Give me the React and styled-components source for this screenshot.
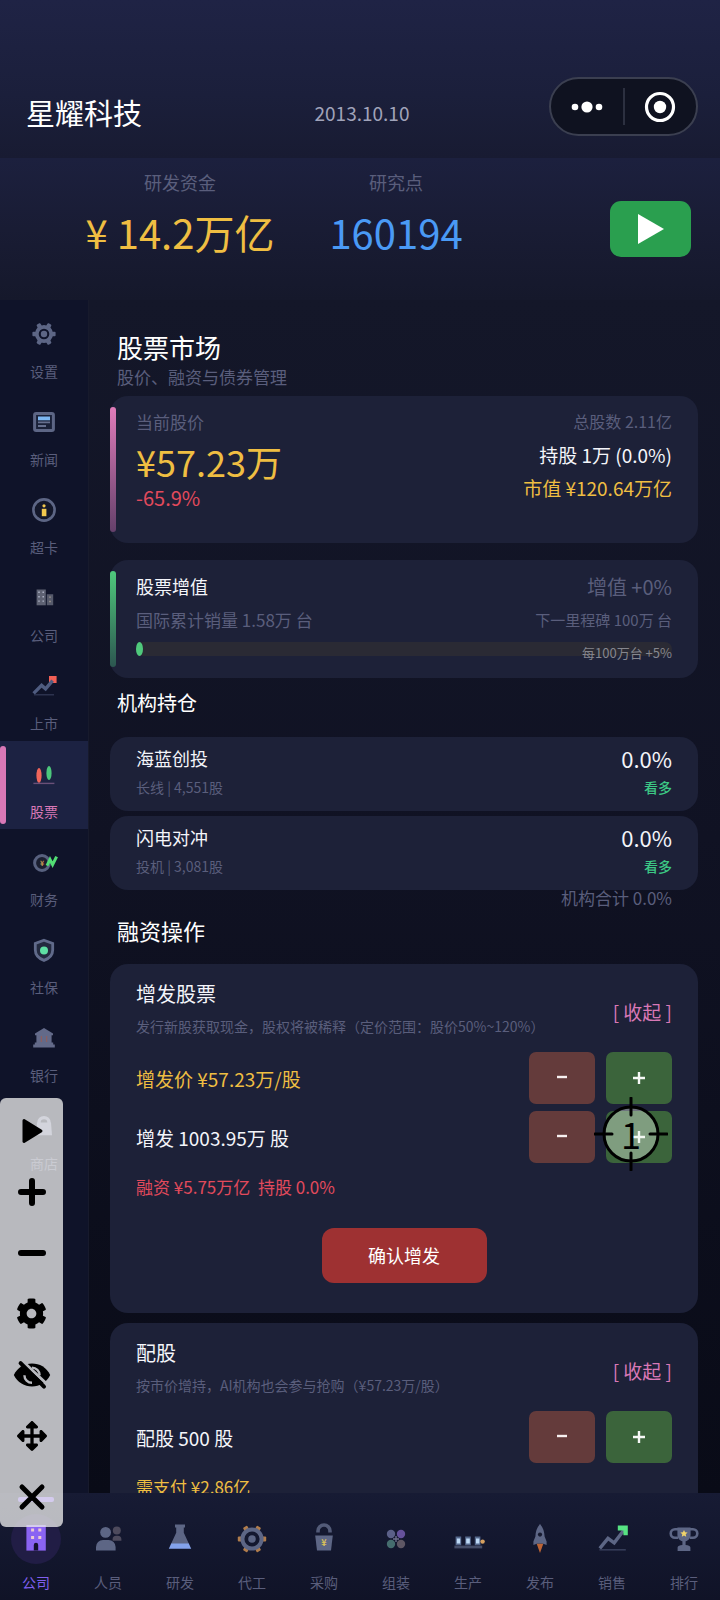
// Packages
import React from 'react';
import styled, { createGlobalStyle, css } from 'styled-components';
import { FaArrowsAlt, FaCog } from 'react-icons/fa';

const GlobalStyle = createGlobalStyle`
    * {
        box-sizing: border-box;
    }

    body {
        margin: 0;
        background-color: #0b0d1a;
        color: #FFF;
        font-family: 'Noto Sans CJK SC', 'Noto Sans', sans-serif;
        font-size: 17px;
    }

    button {
        border: 0;
        padding: 0;
        background: none;
        color: inherit;
        font: inherit;
        cursor: pointer;
    }

    h1, h2, h3, p {
        margin: 0;
        font-weight: 400;
    }
`

const colors = {
    white: '#F4F5FA',
    muted: '#5A5E7C',
    gold: '#EFBE42',
    blue: '#4A9AF5',
    red: '#E24A5C',
    pink: '#D878B6',
    green: '#3CC985',
    steel: '#5D6685',
}

const Page = styled.div`
    height: 100vh;
    display: flex;
    flex-direction: column;
    position: relative;
    overflow: hidden;
`

/* Header */

const TitleBar = styled.header`
    display: grid;
    grid-template-columns: 1fr auto 1fr;
    align-items: center;
    padding: 77px 22px 11px 26px;
    height: 158px;
    background: linear-gradient(180deg, #1F2345 0%, #1B1F3B 60%, #181B32 100%);
`

const CompanyName = styled.h1`
    font-size: 29px;
    line-height: 44px;
`

const GameDate = styled.time`
    color: #A0A3BA;
    font-size: 19px;
`

const Capsule = styled.div`
    justify-self: end;
    align-self: start;
    width: 149px;
    height: 59px;
    display: flex;
    align-items: center;
    border: 2px solid #3B3F50;
    border-radius: 30px;
    background-color: #0F1220;
`

const CapsuleButton = styled.button`
    flex: 1;
    height: 37px;
    display: flex;
    align-items: center;
    justify-content: center;

    & + & {
        border-left: 2px solid #2C3040;
    }
`

const StatsBar = styled.section`
    display: flex;
    align-items: flex-start;
    height: 142px;
    padding: 12px 29px 0 10%;
    background: linear-gradient(180deg, #1C203E 0%, #191C34 50%, #15182B 100%);
`

const Stat = styled.div`
    width: 216px;
    text-align: center;
    color: ${props => props.$color};
    font-size: 40px;
    line-height: 60px;
    white-space: nowrap;
`

const StatLabel = styled.div`
    color: ${colors.muted};
    font-size: 18px;
    line-height: 24px;
    margin-bottom: 8px;
`

const PlayButton = styled.button`
    margin: 31px 0 0 auto;
    width: 81px;
    height: 56px;
    border-radius: 11px;
    background-color: #2A9F4F;
    display: flex;
    align-items: center;
    justify-content: center;
`

/* Sidebar */

const Body = styled.div`
    flex: 1;
    min-height: 0;
    display: flex;
`

const Sidebar = styled.nav`
    flex: none;
    width: 88px;
    padding-top: 1px;
    overflow: hidden;
    background-color: #0F1329;
`

const SideItem = styled.button`
    position: relative;
    width: 100%;
    height: 88px;
    padding-top: 21px;
    display: flex;
    flex-direction: column;
    align-items: center;
    gap: 15px;
    color: ${colors.muted};
    font-size: 14px;
    line-height: 20px;

    svg {
        display: block;
        overflow: visible;
    }

    ${props => props.$active && css`
        background-color: #1C2242;
        color: ${colors.pink};

        &::before {
            content: '';
            position: absolute;
            top: 5px;
            bottom: 5px;
            left: 0;
            width: 6px;
            border-radius: 3px;
            background-color: ${colors.pink};
        }
    `}
`

/* Content */

const Content = styled.main`
    flex: 1;
    min-width: 0;
    padding: 29px 22px 0 21px;
    overflow-y: auto;
    scrollbar-width: none;
    border-left: 1px solid #171A2C;
    background: linear-gradient(180deg, #141729 0%, #101223 45%, #090B17 100%);
`

const PageTitle = styled.h2`
    padding-left: 7px;
    font-size: 26px;
    line-height: 36px;
`

const PageSubtitle = styled.p`
    padding-left: 7px;
    margin-bottom: 7px;
    color: ${colors.muted};
    line-height: 24px;
`

const SectionTitle = styled.h2`
    padding: 0 7px 9px;
    font-size: ${props => props.$size}px;
    line-height: 50px;
`

const Card = styled.section`
    position: relative;
    padding: ${props => props.$padding};
    margin-bottom: ${props => props.$gap || 0}px;
    border-radius: 18px;
    background-color: #1D2138;

    ${props => props.$accent && css`
        &::before {
            content: '';
            position: absolute;
            top: 11px;
            bottom: 11px;
            left: 0;
            width: 6px;
            border-radius: 3px;
            background: linear-gradient(180deg, ${props.$accent});
        }
    `}
`

const Row = styled.div`
    display: flex;
    align-items: ${props => props.$align || 'center'};
    justify-content: space-between;
`

const Column = styled.div`
    display: flex;
    flex-direction: column;
    align-items: ${props => props.$end ? 'flex-end' : 'flex-start'};
`

const Text = styled.p`
    color: ${props => colors[props.$color || 'white']};
    font-size: ${props => props.$size || 17}px;
    font-weight: ${props => props.$weight || 400};
    line-height: ${props => props.$line || 33}px;
    white-space: pre;
`

const Track = styled.div`
    position: relative;
    height: 14px;
    margin-top: 6px;
    border-radius: 7px;
    background-color: #2A2A34;
`

const TrackFill = styled.div`
    height: 100%;
    min-width: 7px;
    border-radius: 50%;
    background-color: #4FC97C;
`

const TrackNote = styled.span`
    position: absolute;
    top: 4px;
    right: 0;
    color: #85868E;
    font-size: 13px;
    line-height: 14px;
`

const HoldingTotal = styled.p`
    padding-right: 26px;
    text-align: right;
    color: ${colors.muted};
    line-height: 15px;
`

const ToggleButton = styled.button`
    padding-top: 5px;
    color: ${colors.pink};
    font-size: 19px;
    line-height: 28px;
`

const Steps = styled.div`
    display: flex;
    flex-direction: column;
    gap: 7px;
    margin: 10px 0 9px;
`

const StepButtons = styled.div`
    display: flex;
    gap: 11px;
`

const StepButton = styled.button`
    width: 66px;
    height: 52px;
    border-radius: 7px;
    background-color: ${props => props.$plus ? '#3B643B' : '#643B3B'};
    display: flex;
    align-items: center;
    justify-content: center;
`

const ConfirmButton = styled.button`
    display: block;
    width: 165px;
    height: 55px;
    margin: 26px auto 0;
    border-radius: 12px;
    background-color: #9E3132;
    font-size: 18px;
    line-height: 55px;
`

/* Bottom navigation */

const TabBar = styled.nav`
    flex: none;
    display: flex;
    background: linear-gradient(180deg, #171B34 0%, #13172E 50%, #101327 100%);
`

const Tab = styled.button`
    position: relative;
    flex: 1;
    padding: 21px 0 8px;
    display: flex;
    flex-direction: column;
    align-items: center;
    gap: 8px;
    color: ${props => props.$active ? '#7F5FEE' : colors.muted};
    font-size: 14px;
    line-height: 20px;

    ${props => props.$active && css`
        &::before {
            content: '';
            position: absolute;
            top: 4px;
            left: 18px;
            right: 18px;
            height: 5px;
            border-radius: 2px;
            background-color: #8560F5;
        }
    `}
`

const TabIcon = styled.span`
    width: 50px;
    height: 50px;
    display: flex;
    align-items: center;
    justify-content: center;
    border-radius: 50%;
    background-color: ${props => props.$active ? '#211D45' : 'transparent'};

    svg {
        overflow: visible;
    }
`

/* Auto clicker that floats over the game */

const FloatingBar = styled.div`
    position: absolute;
    left: 0;
    bottom: 73px;
    width: 63px;
    padding-top: 2px;
    border-radius: 6px;
    background-color: rgba(235, 235, 235, 0.77);
    color: #000;
`

const FloatingButton = styled.button`
    width: 100%;
    height: 61px;
    display: flex;
    align-items: center;
    justify-content: center;
`

const Crosshair = styled.div`
    position: absolute;
    top: 1097px;
    right: 52px;
    width: 74px;
    height: 74px;
    color: #000;
    font-size: 36px;
    line-height: 72px;
    text-align: center;
    pointer-events: none;

    svg {
        position: absolute;
        top: 0;
        left: 0;
        z-index: -1;
    }
`

const CrosshairLayer = styled.div`
    position: relative;
    z-index: 0;
    height: 100%;
`

const teeth = [0, 60, 120, 180, 240, 300];

const sideItems = [
    {
        label: '设置',
        icon: (
            <g>
                <circle cx="12" cy="12" r="7.2" fill="none" stroke={colors.steel} strokeWidth="3.8" />
                <circle cx="12" cy="12" r="3.2" fill={colors.steel} />
                {teeth.map(a => (
                    <rect key={a} x="19" y="9.8" width="4.6" height="4.4" rx="1" fill={colors.steel} transform={`rotate(${a} 12 12)`} />
                ))}
            </g>
        ),
    },
    {
        label: '新闻',
        icon: (
            <g>
                <rect x="2.6" y="3.6" width="18.8" height="16.8" rx="1.5" fill="#1A2138" stroke={colors.steel} strokeWidth="3" />
                <path d="M6 6.5h12v3.8H6z" fill="#7DB7F2" />
                <path d="M6 12.4h12M6 16h8" stroke="#66708F" strokeWidth="1.8" />
            </g>
        ),
    },
    {
        label: '超卡',
        icon: (
            <g>
                <circle cx="12" cy="12" r="10.6" fill="#14182B" stroke={colors.steel} strokeWidth="2.6" />
                <circle cx="12" cy="7.8" r="1.6" fill="#F3C94E" />
                <path d="M9.8 10.8h4.6v7.4H9.8z" fill="#F3C94E" />
            </g>
        ),
    },
    {
        label: '公司',
        icon: (
            <g>
                <path d="M4.6 3.5h9.2v15.8H4.6z" fill="#5E6273" />
                <path d="M14.8 8.2h6.4v11.1h-6.4z" fill="#565A6B" />
                <path d="M7 5.6v12M11.2 5.6v12" stroke="#B4B9CC" strokeWidth="1.4" strokeDasharray="1.4 3" />
                <path d="M18 10.4v8" stroke="#A79F93" strokeWidth="1.4" strokeDasharray="1.4 3" />
            </g>
        ),
    },
    {
        label: '上市',
        icon: (
            <g>
                <path d="M17 2h7.6v7H17z" fill="#F25F55" />
                <path d="M1.6 19.4L9.6 11.4L13.6 14.8L20.6 6.6" fill="none" stroke="#4F5C80" strokeWidth="3.4" />
                <path d="M2 20.8h20" stroke="#343B58" strokeWidth="1.2" />
            </g>
        ),
    },
    {
        label: '股票',
        active: true,
        icon: (
            <g>
                <ellipse cx="7" cy="13.4" rx="2.6" ry="7.4" fill="#F0655A" />
                <ellipse cx="17" cy="11" rx="2.6" ry="7" fill="#4CC77C" />
                <path d="M1.4 21.4h21" stroke="#6A5078" strokeWidth="1.4" />
            </g>
        ),
    },
    {
        label: '财务',
        icon: (
            <g>
                <circle cx="10" cy="13" r="7.4" fill="#1B1F30" stroke="#58617F" strokeWidth="3" />
                <text x="10" y="15.6" fontSize="7" fontWeight="700" textAnchor="middle" fill="#C79A55">¥</text>
                <path d="M15 15.6L18 9.4L20.6 14.6L24.6 6.6" fill="none" stroke="#52DE74" strokeWidth="3" />
            </g>
        ),
    },
    {
        label: '社保',
        icon: (
            <g>
                <path d="M12 2.2L20.7 5.4V12C20.7 17 17 20.6 12 22.4C7 20.6 3.3 17 3.3 12V5.4Z" fill="#232A3F" stroke="#606A8A" strokeWidth="2.8" />
                <circle cx="12" cy="12.6" r="4" fill="#5FE0A4" />
            </g>
        ),
    },
    {
        label: '银行',
        icon: (
            <g fill="#636A89">
                <path d="M12 2L21 7.4V9.2H3V7.4Z" />
                <path d="M4.4 9h15.2v8.4H4.4z" />
                <path d="M2.8 16.4h18.4v2.2H2.8zM1.2 18.6h21.6v3H1.2z" />
                <path d="M9.4 10v6M14.6 10v6" stroke="#8B5F62" strokeWidth="1.3" />
            </g>
        ),
    },
    {
        label: '商店',
        icon: (
            <g>
                <path d="M7 10V8.6a5 5 0 0 1 10 0V10" fill="none" stroke="#8088AA" strokeWidth="3.4" />
                <path d="M5 8.6h14l1 12.6H4z" fill="#8088AA" />
            </g>
        ),
    },
];

const tabs = [
    {
        label: '公司',
        active: true,
        icon: (
            <g>
                <path d="M5.4 1h19.4v25.6H5.4z" fill="#8A63F2" />
                <path d="M11.6 4.4v10.8M18.8 4.4v10.8" stroke="#EBC9D2" strokeWidth="3" strokeDasharray="3 4.6" />
                <path d="M12.8 26.6V21a2.2 2.2 0 0 1 4.4 0v5.6z" fill="#15122D" />
            </g>
        ),
    },
    {
        label: '人员',
        icon: (
            <g fill={colors.steel}>
                <circle cx="12.6" cy="8.4" r="5.4" />
                <path d="M3 26.4V23a7 7 0 0 1 7-7h5.6a7 7 0 0 1 7 7v3.4z" />
                <circle cx="23.8" cy="6.6" r="4" fill="#4D4A5C" />
                <path d="M19.6 16.8v-1.4a3.6 3.6 0 0 1 3.6-3.6h1.6a3.6 3.6 0 0 1 3.6 3.6v1.4z" fill="#4D4A5C" />
            </g>
        ),
    },
    {
        label: '研发',
        icon: (
            <g>
                <path d="M10 .6h10v3h-1.2v5.2L24 20H6L11.2 8.8V3.6H10z" fill={colors.steel} />
                <path d="M6.2 19.4h17.6l2.4 5.4H3.8z" fill="#84A3EC" />
            </g>
        ),
    },
    {
        label: '代工',
        icon: (
            <g>
                {teeth.map(a => (
                    <rect key={a} x="24.6" y="12.6" width="4.6" height="4.8" rx="1" fill="#B07C4B" transform={`rotate(${a} 15 15)`} />
                ))}
                <circle cx="15" cy="15" r="9.6" fill="none" stroke={colors.steel} strokeWidth="4" />
                <circle cx="15" cy="15" r="3.8" fill={colors.steel} />
            </g>
        ),
    },
    {
        label: '采购',
        icon: (
            <g>
                <path d="M9 8.4V7a6 6 0 0 1 12 0v1.4" fill="none" stroke="#535B78" strokeWidth="3.6" />
                <path d="M6.2 11.6h17.6L22 26.4H8z" fill={colors.steel} />
                <text x="15" y="22.4" fontSize="9" fontWeight="700" textAnchor="middle" fill="#D9C15A">¥</text>
            </g>
        ),
    },
    {
        label: '组装',
        icon: (
            <g>
                <circle cx="10" cy="10" r="4.2" fill="#5B6088" />
                <circle cx="20" cy="10" r="4.2" fill="#65519B" />
                <circle cx="10" cy="20" r="4.2" fill="#456D6E" />
                <circle cx="20" cy="20" r="4.2" fill="#5E5764" />
                <path d="M15 12v6M12 15h6" stroke="#6D6F8C" strokeWidth="1.4" />
            </g>
        ),
    },
    {
        label: '生产',
        icon: (
            <g>
                <path d="M1.4 21.6h27.8v2.8H1.4z" fill="#454D68" />
                <path d="M2.6 12.6h5.6v8.6H2.6zM12.2 12.6h5.6v8.6h-5.6zM21.8 12.6h5.6v8.6h-5.6z" fill="#55688C" />
                <path d="M3.8 14.6h3.4v5H3.8zM13.2 14.6h3.6v5h-3.6zM23 14.6h3.4v5H23z" fill="#BDD9F5" />
                <circle cx="29.6" cy="17.6" r="2.2" fill="#D5A060" />
            </g>
        ),
    },
    {
        label: '发布',
        icon: (
            <g>
                <path d="M11.6 19.4h6.8L15 29z" fill="#BC6435" />
                <path d="M15 0C18.4 4 19.4 8 19.6 12.4L21.6 17.6V21L17.6 19.4H12.4L8.4 21V17.6L10.4 12.4C10.6 8 11.6 4 15 0Z" fill={colors.steel} />
                <circle cx="15" cy="10.6" r="2.1" fill="#171B30" />
            </g>
        ),
    },
    {
        label: '销售',
        icon: (
            <g>
                <path d="M2.8 24.4L11 14.4L17.2 18.8L27 6" fill="none" stroke={colors.steel} strokeWidth="3.4" />
                <path d="M20.8 1.6h10v9.6h-4.4V6.4h-5.6z" fill="#57E383" />
                <path d="M2.4 25.8h26.4" stroke="#353C58" strokeWidth="1.6" />
            </g>
        ),
    },
    {
        label: '排行',
        icon: (
            <g>
                <path d="M9 5.2H6a3.4 3.4 0 0 0 0 8.6h3M21 5.2h3a3.4 3.4 0 0 1 0 8.6h-3" fill="none" stroke={colors.steel} strokeWidth="2.6" />
                <path d="M8.4 3.4h13.2v7.2c0 4-2.8 7-6.6 7s-6.6-3-6.6-7z" fill={colors.steel} />
                <path d="M13.4 17h3.2v4c2.6 0 4.8 1 4.8 2.6V27H8.6v-3.4c0-1.6 2.2-2.6 4.8-2.6z" fill={colors.steel} />
                <path d="M15 6l1.1 2.3 2.5.3-1.9 1.7.5 2.5-2.2-1.3-2.2 1.3.5-2.5-1.9-1.7 2.5-.3z" fill="#F0D36A" />
            </g>
        ),
    },
];

function HideIcon() {
    return (
        <svg width="38" height="30" viewBox="0 0 38 30">
            <mask id="hide-cut">
                <path d="M0 0h38v30H0z" fill="#FFF" />
                <path d="M26.6 15.2A7.6 7.6 0 0 0 19 7.6M11.4 15.2A7.6 7.6 0 0 0 19 22.8" fill="none" stroke="#000" strokeWidth="2.4" />
                <path d="M10 1.600L36 26" stroke="#000" strokeWidth="3" />
            </mask>
            <path d="M.8 15C4.6 7.400 11.400 3.600 19 3.600S33.400 7.400 37.200 15C33.400 22.600 26.600 26.400 19 26.400S4.600 22.600.8 15Z" mask="url(#hide-cut)" />
            <path d="M7.600 3.200L31 26.600" stroke="#000" strokeWidth="4" strokeLinecap="round" />
        </svg>
    );
}

const floatingButtons = [
    {
        label: '开始',
        icon: (
            <svg width="24" height="26">
                <path d="M4 2.6L21 13L4 23.4Z" stroke="#000" strokeWidth="3" strokeLinejoin="round" />
            </svg>
        ),
    },
    {
        label: '添加',
        icon: (
            <svg width="28" height="28">
                <path d="M3 14h22M14 3v22" stroke="#000" strokeWidth="6" strokeLinecap="round" />
            </svg>
        ),
    },
    {
        label: '移除',
        icon: (
            <svg width="28" height="28">
                <path d="M3 14h22" stroke="#000" strokeWidth="6" strokeLinecap="round" />
            </svg>
        ),
    },
    { label: '选项', icon: <FaCog size={31} /> },
    { label: '隐藏', icon: <HideIcon /> },
    { label: '移动', icon: <FaArrowsAlt size={30} /> },
    {
        label: '关闭',
        icon: (
            <svg width="28" height="28">
                <path d="M4 4l20 20M24 4L4 24" stroke="#000" strokeWidth="5" strokeLinecap="round" />
            </svg>
        ),
    },
];

const holders = [
    { name: '海蓝创投', detail: '长线 | 4,551股', share: '0.0%', view: '看多' },
    { name: '闪电对冲', detail: '投机 | 3,081股', share: '0.0%', view: '看多' },
];

function Stepper(props) {
    return (
        <Row>
            <Text $size={19} $color={props.color}>{props.text}</Text>
            <StepButtons>
                <StepButton aria-label="减少">
                    <svg width="14" height="14"><path d="M2 6h10" stroke="#F6EFEF" strokeWidth="2.4" /></svg>
                </StepButton>
                <StepButton $plus aria-label="增加">
                    <svg width="14" height="14"><path d="M1 7h12M7 1v12" stroke="#F6F8F6" strokeWidth="2.4" /></svg>
                </StepButton>
            </StepButtons>
        </Row>
    );
}

function OperationHeader(props) {
    return (
        <Row>
            <Column>
                <Text as="h3" $size={20} $line={34}>{props.title}</Text>
                <Text $size={14} $line={31} $color="muted">{props.hint}</Text>
            </Column>
            <ToggleButton>[ 收起 ]</ToggleButton>
        </Row>
    );
}

function Header() {
    return (
        <>
            <TitleBar>
                <CompanyName>星耀科技</CompanyName>
                <GameDate>2013.10.10</GameDate>
                <Capsule>
                    <CapsuleButton aria-label="更多">
                        <svg width="32" height="14" fill="#FFF">
                            <circle cx="4" cy="7" r="3.3" />
                            <circle cx="16" cy="7" r="5.6" />
                            <circle cx="28" cy="7" r="3.3" />
                        </svg>
                    </CapsuleButton>
                    <CapsuleButton aria-label="退出">
                        <svg width="32" height="32">
                            <circle cx="16" cy="16" r="13.5" fill="none" stroke="#FFF" strokeWidth="3.2" />
                            <circle cx="16" cy="16" r="6.2" fill="#FFF" />
                        </svg>
                    </CapsuleButton>
                </Capsule>
            </TitleBar>
            <StatsBar>
                <Stat $color={colors.gold}>
                    <StatLabel>研发资金</StatLabel>
                    ¥ 14.2万亿
                </Stat>
                <Stat $color={colors.blue}>
                    <StatLabel>研究点</StatLabel>
                    160194
                </Stat>
                <PlayButton aria-label="继续">
                    <svg width="26" height="30"><path d="M0 0L26 15L0 30Z" fill="#FFF" /></svg>
                </PlayButton>
            </StatsBar>
        </>
    );
}

export default function App() {
    return (
        <Page>
            <GlobalStyle />
            <Header />

            <Body>
                <Sidebar>
                    {sideItems.map(item => (
                        <SideItem key={item.label} $active={item.active}>
                            <svg width="24" height="24" viewBox="0 0 24 24">{item.icon}</svg>
                            {item.label}
                        </SideItem>
                    ))}
                </Sidebar>

                <Content>
                    <PageTitle>股票市场</PageTitle>
                    <PageSubtitle>股价、融资与债券管理</PageSubtitle>

                    <Card $padding="9px 26px 31px" $gap={17} $accent="#E07CBA, #64406A">
                        <Row $align="flex-start">
                            <Column>
                                <Text $color="muted">当前股价</Text>
                                <Text $color="gold" $size={36} $line={46}>¥57.23万</Text>
                                <Text $color="red" $size={20} $line={28}>-65.9%</Text>
                            </Column>
                            <Column $end>
                                <Text $color="muted" $size={16}>总股数 2.11亿</Text>
                                <Text $size={19}>持股 1万 (0.0%)</Text>
                                <Text $color="gold" $size={19}>市值 ¥120.64万亿</Text>
                            </Column>
                        </Row>
                    </Card>

                    <Card $padding="10px 26px 22px" $accent="#4FC97C, #2C5650">
                        <Row>
                            <Text as="h3" $size={18}>股票增值</Text>
                            <Text $color="muted" $size={20}>增值 +0%</Text>
                        </Row>
                        <Row>
                            <Text $color="muted">国际累计销量 1.58万 台</Text>
                            <Text $color="muted" $size={15}>下一里程碑 100万 台</Text>
                        </Row>
                        <Track>
                            <TrackFill style={{ width: `${1.58 / 100}%` }} />
                            <TrackNote>每100万台 +5%</TrackNote>
                        </Track>
                    </Card>

                    <SectionTitle $size={20}>机构持仓</SectionTitle>
                    {holders.map((holder, i) => (
                        <Card key={holder.name} $padding="6px 26px 10px" $gap={i < holders.length - 1 ? 5 : 0}>
                            <Row>
                                <Text as="h3" $size={18} $line={30}>{holder.name}</Text>
                                <Text $size={22} $line={30}>{holder.share}</Text>
                            </Row>
                            <Row>
                                <Text $color="muted" $size={14} $line={28}>{holder.detail}</Text>
                                <Text $color="green" $size={14} $line={28} $weight={500}>{holder.view}</Text>
                            </Row>
                        </Card>
                    ))}
                    <HoldingTotal>机构合计 0.0%</HoldingTotal>

                    <SectionTitle $size={22}>融资操作</SectionTitle>
                    <Card $padding="13px 26px 30px" $gap={10}>
                        <OperationHeader title="增发股票" hint="发行新股获取现金，股权将被稀释（定价范围：股价50%~120%）" />
                        <Steps>
                            <Stepper color="gold" text="增发价 ¥57.23万/股" />
                            <Stepper text="增发 1003.95万 股" />
                        </Steps>
                        <Text $color="red" $line={30}>{'融资 ¥5.75万亿  持股 0.0%'}</Text>
                        <ConfirmButton>确认增发</ConfirmButton>
                    </Card>

                    <Card $padding="13px 26px 30px">
                        <OperationHeader title="配股" hint="按市价增持，AI机构也会参与抢购（¥57.23万/股）" />
                        <Steps>
                            <Stepper text="配股 500 股" />
                        </Steps>
                        <Text $color="gold" $line={30}>需支付 ¥2.86亿</Text>
                    </Card>
                </Content>
            </Body>

            <TabBar>
                {tabs.map(tab => (
                    <Tab key={tab.label} $active={tab.active}>
                        <TabIcon $active={tab.active}>
                            <svg width="30" height="30" viewBox="0 0 30 30">{tab.icon}</svg>
                        </TabIcon>
                        {tab.label}
                    </Tab>
                ))}
            </TabBar>

            <FloatingBar>
                {floatingButtons.map(button => (
                    <FloatingButton key={button.label} aria-label={button.label}>{button.icon}</FloatingButton>
                ))}
            </FloatingBar>
            <Crosshair>
                <CrosshairLayer>
                    <svg width="74" height="74" stroke="#000" strokeWidth="3">
                        <circle cx="37" cy="37" r="27" fill="rgba(240, 250, 240, 0.38)" />
                        <path d="M37 1v17M37 56v17M1 37h17M56 37h17" strokeLinecap="round" />
                    </svg>
                    1
                </CrosshairLayer>
            </Crosshair>
        </Page>
    );
};
